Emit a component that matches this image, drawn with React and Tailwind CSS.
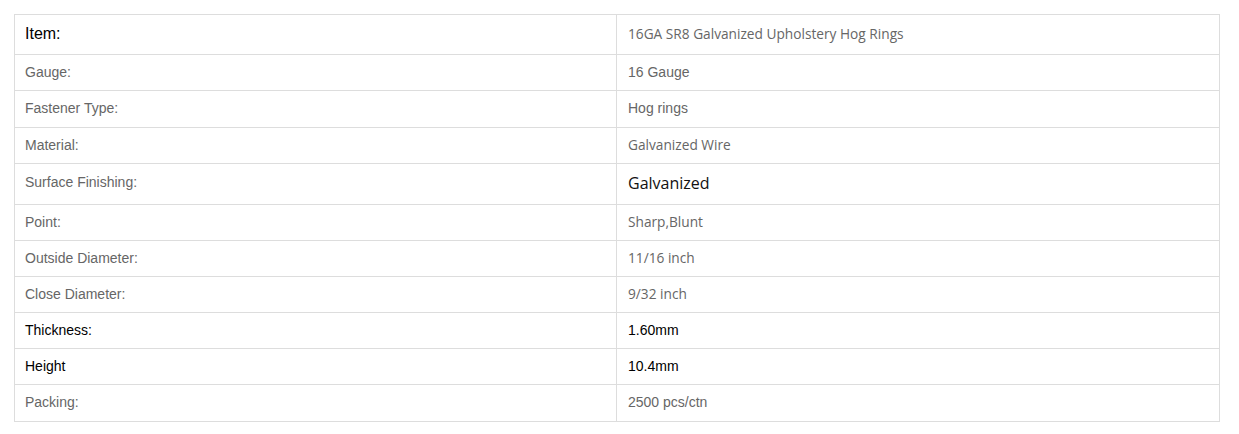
const arial = "font-['Liberation_Sans',Arial,sans-serif]";
const open = "font-['Open_Sans',sans-serif]";

const rows = [
  {
    h: "h-[39px]",
    label: "Item:",
    labelCls: `${arial} text-[16px] text-black`,
    value: "16GA SR8 Galvanized Upholstery Hog Rings",
    valueCls: `${open} text-[13.7px] text-[#666]`,
  },
  { h: "h-[36px]", label: "Gauge:", labelCls: `${arial} text-[14px] text-[#666]`, value: "16 Gauge", valueCls: `${arial} text-[14px] text-[#666]` },
  { h: "h-[37px]", label: "Fastener Type:", labelCls: `${arial} text-[14px] text-[#666]`, value: "Hog rings", valueCls: `${arial} text-[14px] text-[#666]` },
  { h: "h-[36px]", label: "Material:", labelCls: `${arial} text-[14px] text-[#666]`, value: "Galvanized Wire", valueCls: `${open} text-[13.7px] text-[#666]` },
  {
    h: "h-[41px]",
    label: "Surface Finishing:",
    labelCls: `${arial} text-[14px] text-[#666] mb-[3px]`,
    value: "Galvanized",
    valueCls: `${open} text-[16px] text-[#111]`,
  },
  { h: "h-[36px]", label: "Point:", labelCls: `${arial} text-[14px] text-[#666]`, value: "Sharp,Blunt", valueCls: `${open} text-[13.7px] text-[#666]` },
  { h: "h-[36px]", label: "Outside Diameter:", labelCls: `${arial} text-[14px] text-[#666]`, value: "11/16 inch", valueCls: `${open} text-[13.7px] text-[#666]` },
  { h: "h-[36px]", label: "Close Diameter:", labelCls: `${arial} text-[14px] text-[#666]`, value: "9/32 inch", valueCls: `${open} text-[13.7px] text-[#666]` },
  { h: "h-[36px]", label: "Thickness:", labelCls: `${arial} text-[14px] text-black`, value: "1.60mm", valueCls: `${arial} text-[14px] text-black` },
  { h: "h-[36px]", label: "Height", labelCls: `${arial} text-[14px] text-black`, value: "10.4mm", valueCls: `${arial} text-[14px] text-black` },
  { h: "h-[37px]", label: "Packing:", labelCls: `${arial} text-[14px] text-[#666]`, value: "2500 pcs/ctn", valueCls: `${arial} text-[14px] text-[#666]` },
];

const App = () => {
  return (
    <div className="bg-white w-[1239px] h-[434px] pt-[14px] pl-[14px]">
      <div className="w-[1206px] border border-[#dddddd]">
        {rows.map((row, i) => (
          <div
            key={row.label}
            className={`grid grid-cols-[602px_1fr] ${row.h} ${i > 0 ? "border-t border-[#dddddd]" : ""}`}
          >
            <div className="flex items-center pl-[10px] pb-[2px] border-r border-[#dddddd]">
              <span className={`${row.labelCls} leading-[20px]`}>{row.label}</span>
            </div>
            <div className="flex items-center pl-[11px] pb-[2px]">
              <span className={`${row.valueCls} leading-[20px]`}>{row.value}</span>
            </div>
          </div>
        ))}
      </div>
    </div>
  );
};

export default App;
